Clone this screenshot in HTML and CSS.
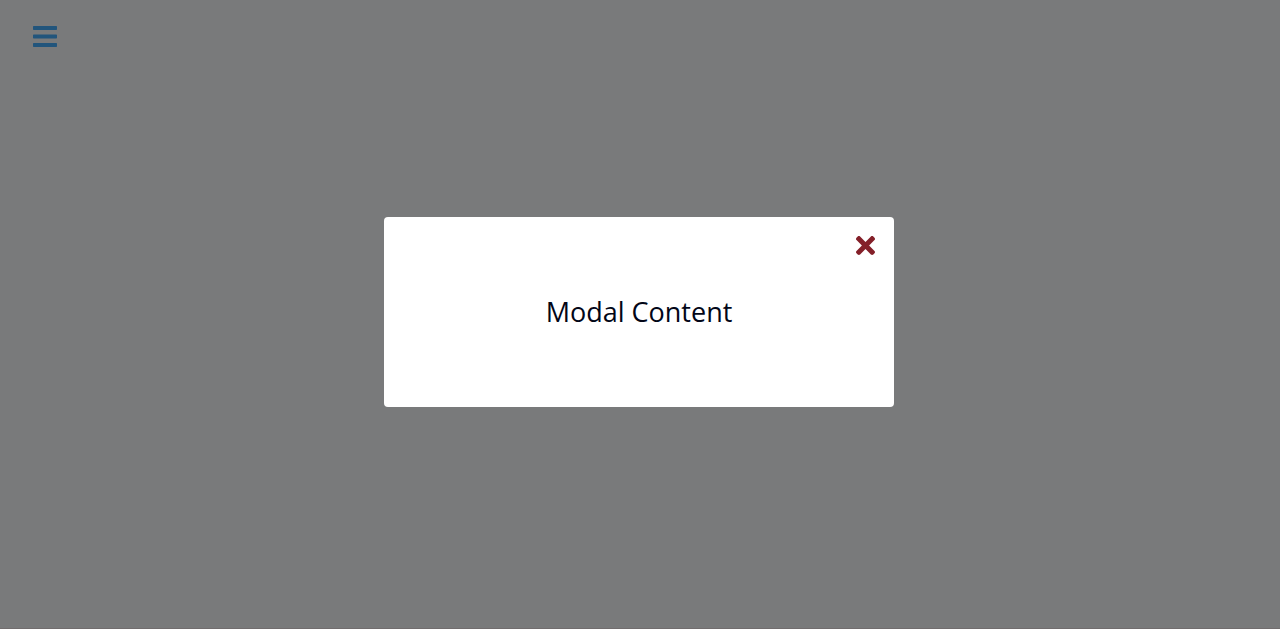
FILE: index.html
```html
<!DOCTYPE html>
<html lang="en">
<head>
<meta charset="utf-8">
<meta name="viewport" content="width=device-width, initial-scale=1">
<title>Modal</title>
<link rel="stylesheet" href="styles.css">
</head>
<body>
<header class="header">
  <button class="menu-button" type="button" aria-label="Open menu">
    <svg class="menu-icon" viewBox="0 0 24 21" aria-hidden="true"><path d="M.7 0h22.600q.7 0 .7.7v2.600q0 .7-.7.7H.7Q0 4 0 3.300V.7Q0 0 .7 0zM.7 8.500h22.600q.7 0 .7.7v2.600q0 .7-.7.7H.7q-.7 0-.7-.7V9.200q0-.7.7-.7zM.7 17h22.600q.7 0 .7.7v2.600q0 .7-.7.7H.7q-.7 0-.7-.7v-2.600q0-.7.7-.7z"/></svg>
  </button>
</header>
<div class="overlay">
  <section class="modal" role="dialog" aria-modal="true" aria-labelledby="modal-title">
    <h1 class="modal-title" id="modal-title">Modal Content</h1>
    <button class="close-button" type="button" aria-label="Close">
      <svg class="close-icon" viewBox="0 80 352 352" aria-hidden="true"><path d="M242.720 256l100.070-100.070c12.280-12.280 12.280-32.190 0-44.480l-22.240-22.240c-12.280-12.280-32.190-12.280-44.480 0L176 189.280 75.930 89.210c-12.280-12.280-32.190-12.280-44.480 0L9.210 111.450c-12.280 12.280-12.280 32.190 0 44.480L109.280 256 9.210 356.070c-12.280 12.280-12.280 32.190 0 44.480l22.240 22.240c12.280 12.280 32.200 12.280 44.480 0L176 322.720l100.070 100.070c12.280 12.280 32.200 12.280 44.480 0l22.240-22.240c12.280-12.280 12.280-32.190 0-44.480L242.720 256z"/></svg>
    </button>
  </section>
</div>
</body>
</html>
```
FILE: styles.css
```css
* {
  box-sizing: border-box;
}

body {
  margin: 0;
  min-height: 100vh;
  background: #797a7b;
  font-family: "Segoe UI", "Open Sans", "Noto Sans", sans-serif;
  color: #020617;
}

button {
  display: block;
  padding: 0;
  border: 0;
  background: none;
  cursor: pointer;
}

.header {
  padding: 26px 33px;
}

.menu-button {
  color: #22557c;
}

.menu-icon {
  display: block;
  width: 24px;
  height: 21px;
  fill: currentColor;
}

.overlay {
  position: fixed;
  inset: 0;
  display: grid;
  place-items: center;
  padding: 0 2px 5px 0;
  border-bottom: 1px solid #716d6e;
}

.modal {
  position: relative;
  display: grid;
  place-items: center;
  width: 100%;
  max-width: 510px;
  min-height: 190px;
  border-radius: 4px;
  background: #fff;
}

.modal-title {
  margin: 0;
  font-size: 27px;
  font-weight: 400;
  line-height: 36px;
}

.close-button {
  position: absolute;
  top: 19px;
  right: 19px;
  color: #842029;
}

.close-icon {
  display: block;
  width: 19px;
  height: 19px;
  fill: currentColor;
}
```
